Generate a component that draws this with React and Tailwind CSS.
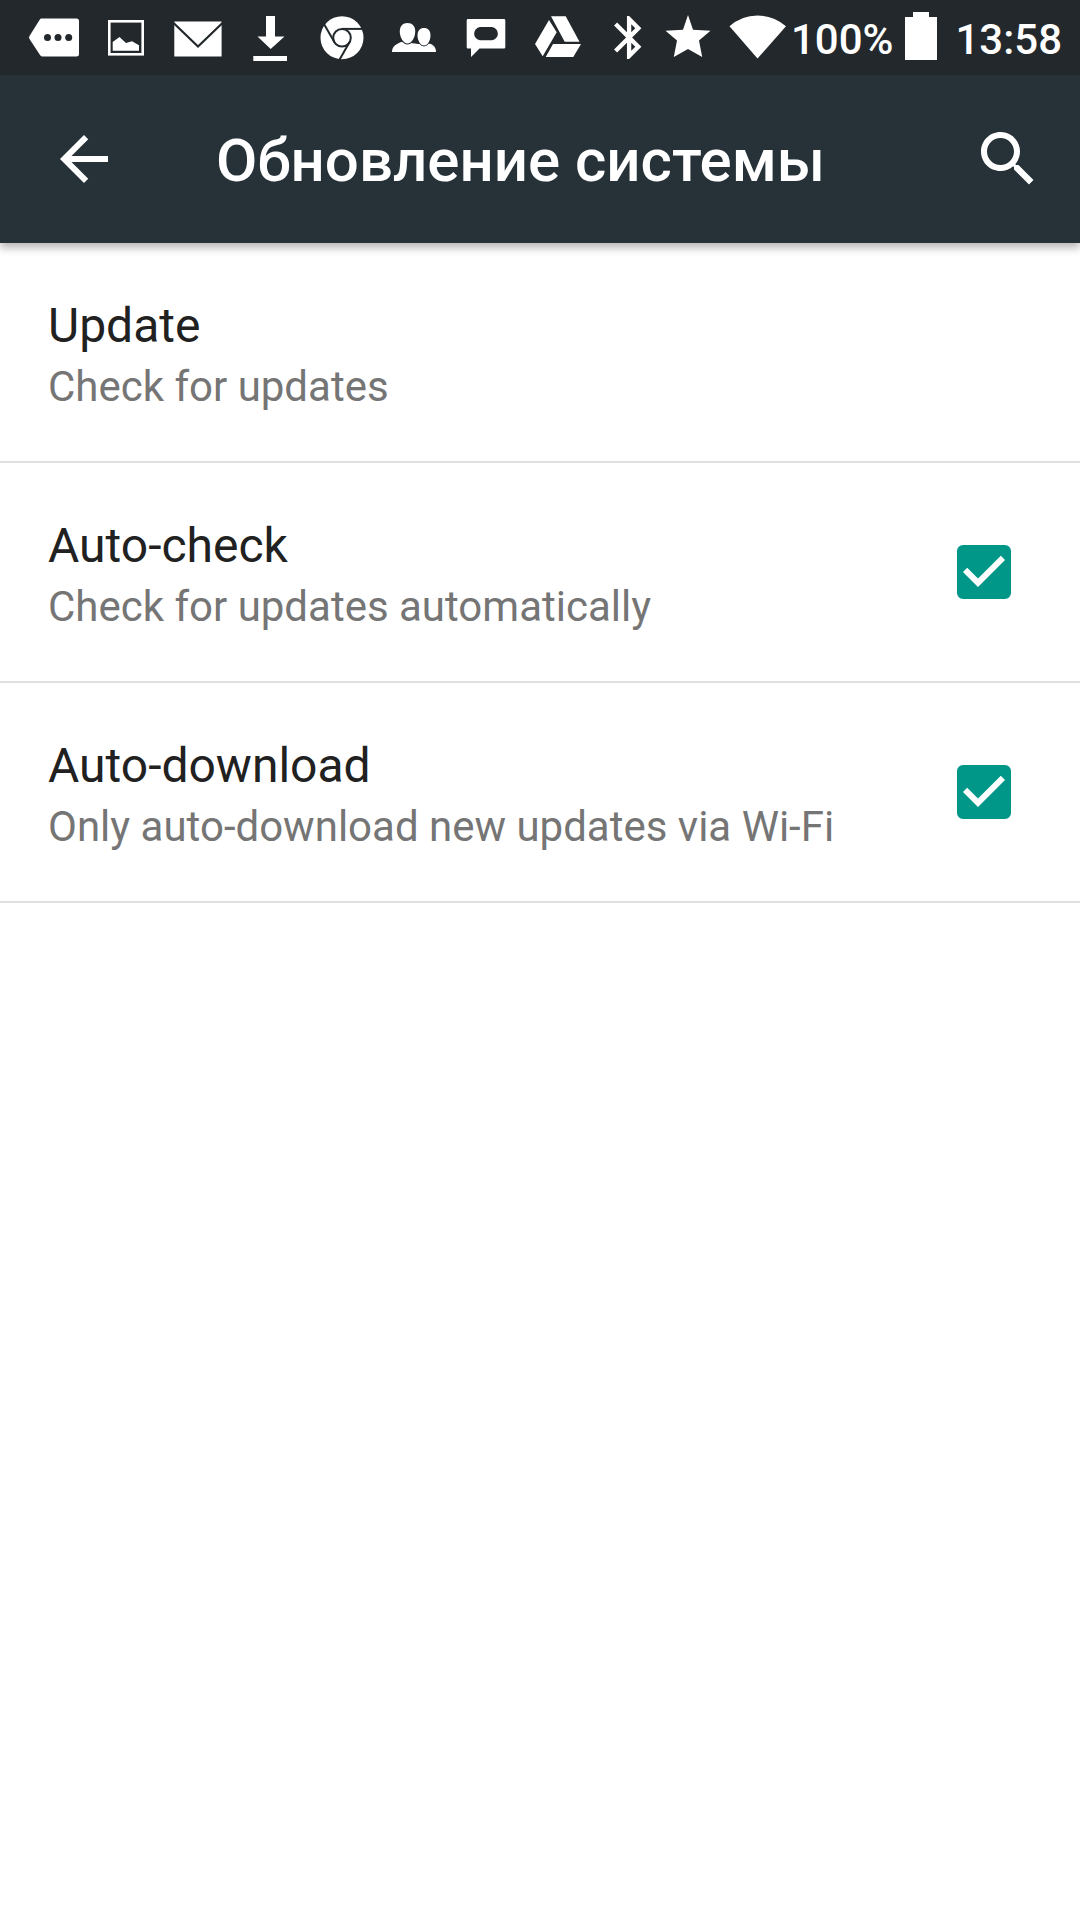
import { useState } from 'react';

const notificationIcons = [
  {
    name: 'More notifications',
    art: (
      <>
        <path fill="#fff" d="M23 18.5H58.500q2.500 0 2.500 2.500V54q0 2.500-2.500 2.500H24.500q-1.500 0-2.500-1.500L11.500 39q-1-1.500 0-3L21.500 20q.7-1.500 1.500-1.500z" />
        <circle cx="29.500" cy="37.500" r="3.500" fill="#22282c" />
        <circle cx="40" cy="37.500" r="3.500" fill="#22282c" />
        <circle cx="50.700" cy="37.500" r="3.500" fill="#22282c" />
      </>
    ),
  },
  {
    name: 'Screenshot',
    art: (
      <>
        <rect x="19.300" y="21.300" width="33.400" height="33" fill="none" stroke="#fff" strokeWidth="2.600" />
        <path fill="#fff" d="M22.700 50.700V42L29.500 37 36 43l6-1.800 7 4v5.500z" />
      </>
    ),
  },
  {
    name: 'Mail',
    art: (
      <>
        <rect x="12.300" y="21.500" width="47.300" height="35" fill="#fff" />
        <path d="M11 22.500L36 46.500 61 22.500" fill="none" stroke="#22282c" strokeWidth="2.200" />
      </>
    ),
  },
  {
    name: 'Download',
    art: <path fill="#fff" d="M32 16h9v20.500h9.500L36.700 49 23.500 36.500H32zM19.300 56H53v5H19.300z" />,
  },
  {
    name: 'Chrome',
    art: (
      <>
        <circle cx="36" cy="37.700" r="21.500" fill="#fff" />
        <g fill="none" stroke="#22282c" strokeWidth="2">
          <circle cx="36" cy="37.700" r="8.800" />
          <path d="M36 28.900H58" />
          <path d="M36 28.900H58" transform="rotate(120 36 37.700)" />
          <path d="M36 28.900H58" transform="rotate(240 36 37.700)" />
        </g>
      </>
    ),
  },
  {
    name: 'Contacts',
    art: (
      <>
        <path fill="#fff" d="M14 52c0-5 3-7.500 9-10l14 1.500 3 .5 12-.3c4 1.500 6 4 6 8.300z" />
        <g fill="#fff" stroke="#22282c" strokeWidth="1.800" paintOrder="stroke">
          <path d="M46 28c4 0 6.500 2.600 6.500 7.500 0 5-3 10-6.500 10s-6.500-5-6.500-10c0-4.900 2.500-7.500 6.500-7.500z" />
          <path d="M29.500 23c4.800 0 7.700 3 7.700 8.500 0 6-3.700 12-7.700 12s-7.700-6-7.700-12c0-5.500 2.900-8.500 7.700-8.500z" />
        </g>
      </>
    ),
  },
  {
    name: 'Message',
    art: (
      <path
        fill="#fff"
        fillRule="evenodd"
        d="M18 19H54q1.300 0 1.300 1.300V47.200q0 1.300-1.300 1.300H29.500L21 57V48.500H18q-1.300 0-1.300-1.300V20.300Q16.700 19 18 19zM30 27a6.700 6.700 0 0 0 0 13.300H42A6.700 6.700 0 0 0 42 27z"
      />
    ),
  },
  {
    name: 'Drive',
    art: (
      <path
        fill="#fff"
        d="M29 16.300H43.700L57.500 41.700H42.700zM27 20l7.700 12.300-14 24L13 44zM31 44H59L51.300 57H23.700z"
      />
    ),
  },
];

function StatusBar() {
  return (
    <div className="flex h-[75px] items-center justify-between bg-[#22282c] px-[18px] text-[42px] font-medium">
      <div className="flex">
        {notificationIcons.map((icon) => (
          <svg key={icon.name} className="h-[75px] w-[72px]" viewBox="0 0 72 75" role="img" aria-label={icon.name}>
            {icon.art}
          </svg>
        ))}
      </div>

      <div className="flex items-center">
        <svg className="h-[75px] w-[60px]" viewBox="0 0 60 75" role="img" aria-label="Bluetooth">
          <path
            fill="#fff"
            transform="translate(5.300 11.700) scale(2.150)"
            d="M17.710 7.710L12 2h-1v7.590L6.410 5 5 6.410 10.590 12 5 17.590 6.410 19 11 14.410V22h1l5.710-5.710-4.300-4.290 4.300-4.290zM13 5.830l1.880 1.880L13 9.590V5.830zm1.880 10.460L13 18.170v-3.760l1.880 1.880z"
          />
        </svg>
        <svg className="h-[75px] w-[60px]" viewBox="0 0 60 75" role="img" aria-label="Priority">
          <path
            fill="#fff"
            d="M30 15l5 14.800 17.500.9L41 40.500 44.200 57 30 49 15.800 57 19 40.500 7.500 30.700l17.500-.9z"
          />
        </svg>
        <svg className="ml-[10px] h-[75px] w-[60px]" viewBox="0 0 60 75" role="img" aria-label="Wi-Fi">
          <path fill="#fff" d="M1.500 26.300Q13.500 15.500 29.500 15.500T58 26.300L29.500 58.500z" />
        </svg>
        <span className="ml-[3px] pt-1">100%</span>
        <svg className="ml-3 h-[75px] w-8" viewBox="0 0 32 75" role="img" aria-label="Battery">
          <path fill="#fff" d="M8 12H24V17H32V60H0V17H8z" />
        </svg>
        <span className="ml-[18px] pt-1">13:58</span>
      </div>
    </div>
  );
}

function Toolbar() {
  return (
    <header className="relative flex h-[168px] items-center bg-[#263238] pr-9 pl-12 shadow-[0_5px_8px_rgba(0,0,0,0.28)]">
      <button type="button" aria-label="Назад">
        <svg className="size-[72px]" viewBox="0 0 24 24" fill="currentColor">
          <path d="M20 11H7.830l5.590-5.590L12 4l-8 8 8 8 1.410-1.410L7.830 13H20v-2z" />
        </svg>
      </button>
      <h1 className="ml-24 flex-1 pt-1 text-[60px] leading-[72px] font-medium">Обновление системы</h1>
      <button type="button" aria-label="Поиск">
        <svg className="size-[72px]" viewBox="0 0 24 24" fill="currentColor">
          <path d="M15.500 14h-.790l-.280-.270C15.410 12.590 16 11.110 16 9.500 16 5.910 13.090 3 9.500 3S3 5.910 3 9.500 5.910 16 9.500 16c1.610 0 3.090-.590 4.230-1.570l.270.280v.790l5 4.990L20.490 19l-4.990-5zm-6 0C7.010 14 5 11.990 5 9.500S7.010 5 9.500 5 14 7.010 14 9.500 11.990 14 9.500 14z" />
        </svg>
      </button>
    </header>
  );
}

function RowText({ title, summary }) {
  return (
    <span className="flex flex-1 flex-col pt-[51px] pb-[45px] text-left">
      <span className="text-5xl leading-[64px] text-[#212121]">{title}</span>
      <span className="text-[42px] leading-[58px] text-[#757575]">{summary}</span>
    </span>
  );
}

function CheckRow({ title, summary }) {
  const [checked, setChecked] = useState(true);

  return (
    <label className="flex items-center border-b-2 border-[#e0e0e0] pr-[69px] pl-12">
      <RowText title={title} summary={summary} />
      <span className="grid size-[54px] *:col-start-1 *:row-start-1">
        <input
          type="checkbox"
          checked={checked}
          onChange={() => setChecked(!checked)}
          className="size-[54px] appearance-none rounded-md border-[6px] border-[#757575] checked:border-[#009688] checked:bg-[#009688]"
        />
        {checked && (
          <svg className="pointer-events-none size-[54px]" viewBox="3 3 18 18" fill="#fff">
            <path d="M10 17l-5-5 1.410-1.410L10 14.170l7.590-7.590L19 8l-9 9z" />
          </svg>
        )}
      </span>
    </label>
  );
}

export default function App() {
  return (
    <div className="min-h-screen bg-white font-[Roboto,sans-serif] text-white">
      <StatusBar />
      <Toolbar />
      <main>
        <button type="button" className="flex w-full items-center border-b-2 border-[#e0e0e0] px-12">
          <RowText title="Update" summary="Check for updates" />
        </button>
        <CheckRow title="Auto-check" summary="Check for updates automatically" />
        <CheckRow title="Auto-download" summary="Only auto-download new updates via Wi-Fi" />
      </main>
    </div>
  );
}
